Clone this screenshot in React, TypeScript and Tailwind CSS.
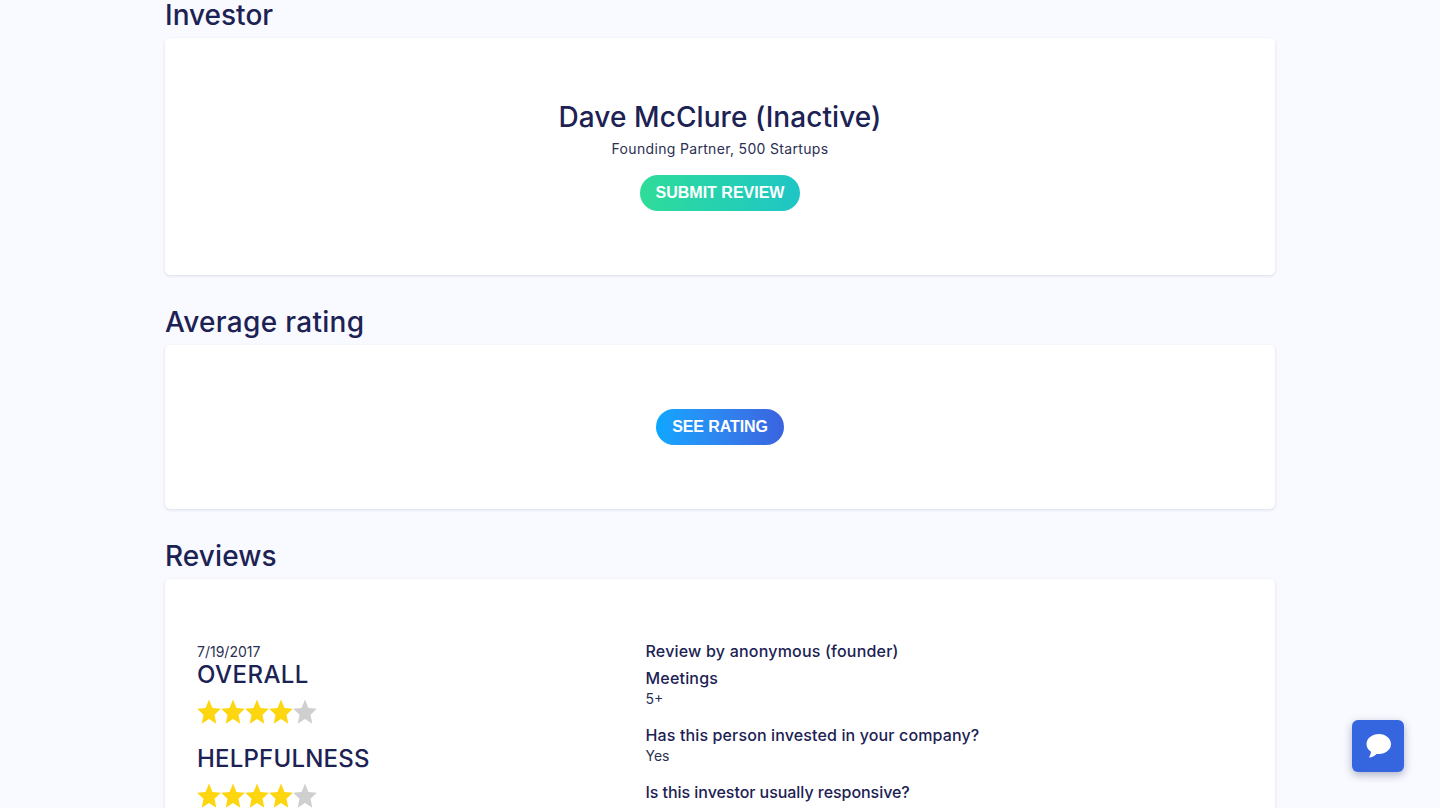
const font = { fontFamily: "Inter, 'Noto Sans', sans-serif" };

function Stars() {
  const d = "M12 .5l3.4 7.7 8.400.8-6.300 5.600 1.800 8.200L12 18.500l-7.300 4.300 1.800-8.200L.2 9l8.400-.8z";
  return (
    <div className="flex h-[26px] items-center">
      {[0, 1, 2, 3, 4].map((i) => (
        <svg key={i} viewBox="0 0 24 24" className="h-[26px] w-[24px] shrink-0" preserveAspectRatio="none">
          <path d={d} fill={i < 4 ? "#fdd60f" : "#cfcfcf"} />
        </svg>
      ))}
    </div>
  );
}

function Qa({ q, a, cls, track }: { q: string; a?: string; cls: string; track: string }) {
  return (
    <div className={cls}>
      <div className={`text-[16px] font-medium leading-[20px] text-[#1c2253] ${track}`}>{q}</div>
      {a && <div className="mt-[2px] text-[14px] leading-[17px] text-[#2b2f52]">{a}</div>}
    </div>
  );
}

export default function App() {
  return (
    <div className="relative h-[808px] overflow-hidden bg-[#f9faff]" style={font}>
      <div className="mx-auto flex w-[1110px] flex-col">
        <h2 className="h-[38px] text-[28px] font-medium leading-[30px] tracking-[0px] text-[#1c2253]">Investor</h2>
        <section className="flex h-[237px] flex-col items-center rounded-[5px] bg-white pt-[61px] shadow-[0_1px_3px_rgba(30,40,90,0.14)]">
          <h1 className="text-[28px] font-medium leading-[36px] tracking-[0.08px] text-[#1c2253]">Dave McClure (Inactive)</h1>
          <p className="mt-[5px] text-[14px] leading-[18px] tracking-[0.33px] text-[#2b2f52]">Founding Partner, 500 Startups</p>
          <button className="mt-[17px] flex h-[36px] w-[160px] items-center justify-center rounded-full bg-gradient-to-r from-[#2fdc98] to-[#1fc5c5] text-[16px] font-bold text-white" style={{ fontFamily: "'Liberation Sans', sans-serif" }}>
            SUBMIT REVIEW
          </button>
        </section>

        <h2 className="mt-[30px] h-[40px] pt-[2px] text-[28px] font-medium leading-[30px] tracking-[0.3px] text-[#1c2253]">Average rating</h2>
        <section className="flex h-[164px] items-center justify-center rounded-[5px] bg-white shadow-[0_1px_3px_rgba(30,40,90,0.14)]">
          <button className="flex h-[36px] w-[128px] items-center justify-center rounded-full bg-gradient-to-r from-[#0ba6ff] to-[#3a63df] text-[16px] font-bold tracking-[-0.1px] text-white" style={{ fontFamily: "'Liberation Sans', sans-serif" }}>
            SEE RATING
          </button>
        </section>

        <h2 className="mt-[30px] h-[40px] pt-[2px] text-[28px] font-medium leading-[30px] tracking-[0.1px] text-[#1c2253]">Reviews</h2>
        <section className="flex h-[400px] rounded-[5px] bg-white pl-[32px] pt-[64px] shadow-[0_1px_3px_rgba(30,40,90,0.14)]">
          <div className="w-[448.5px] shrink-0">
            <div className="text-[14px] leading-[18px] text-[#2b2f52]">7/19/2017</div>
            <div className="text-[24px] font-medium leading-[28px] tracking-[0.45px] text-[#1c2253]">OVERALL</div>
            <div className="mt-[10px]"><Stars /></div>
            <div className="mt-[20px] text-[24px] font-medium leading-[28px] tracking-[0.2px] text-[#1c2253]">HELPFULNESS</div>
            <div className="mt-[10px]"><Stars /></div>
          </div>
          <div className="-mt-[1px] flex-1">
            <div className="text-[16px] font-medium leading-[18px] tracking-[0.2px] text-[#1c2253]">Review by anonymous (founder)</div>
            <Qa cls="mt-[8px]" track="tracking-[0.2px]" q="Meetings" a="5+" />
            <Qa cls="mt-[18px]" track="tracking-[0.13px]" q="Has this person invested in your company?" a="Yes" />
            <Qa cls="mt-[18px]" track="tracking-[-0.05px]" q="Is this investor usually responsive?" />
          </div>
        </section>
      </div>

      <button className="absolute right-[36px] top-[720px] flex h-[52px] w-[52px] items-center justify-center rounded-[6px] bg-[#3566e0] shadow-[0_3px_8px_rgba(30,40,90,0.35)]" aria-label="Chat">
        <svg viewBox="0 0 25 24" className="h-[24px] w-[25px]">
          <path d="M13 0C6 0 .5 4.400.5 10c0 3.200 1.800 6 4.500 7.800-.2 2-1 3.900-2 5.700 2.900-.3 5.500-1.500 7.400-3.600.8.100 1.700.1 2.600.1 6.600 0 12-4.500 12-10S19.600 0 13 0z" fill="#fff" />
        </svg>
      </button>
    </div>
  );
}
